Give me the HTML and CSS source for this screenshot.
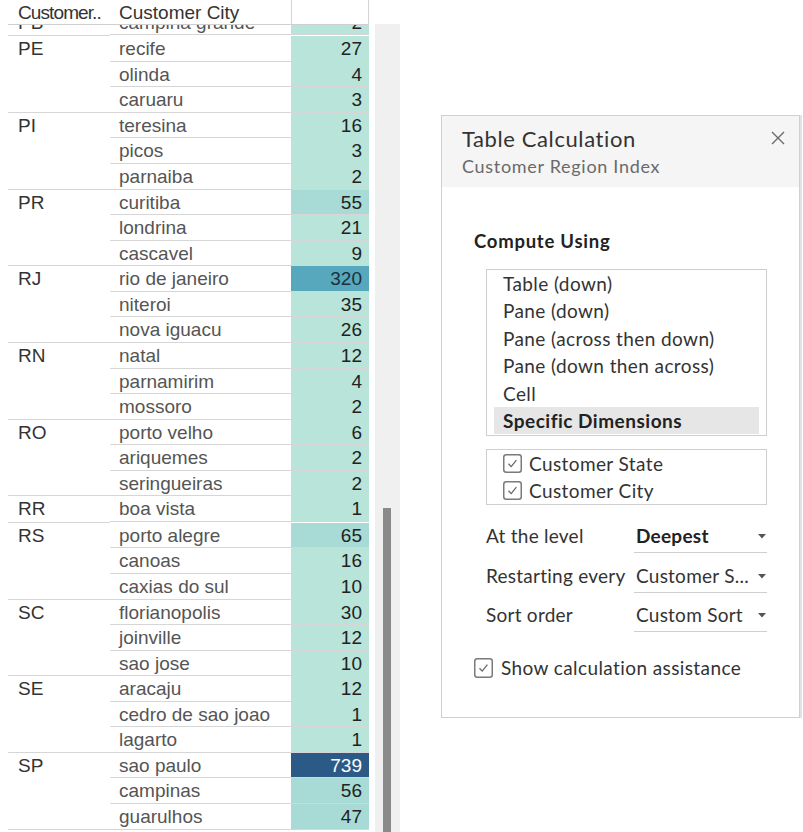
FILE: index.html
```html
<!DOCTYPE html>
<html>
<head>
<meta charset="utf-8">
<link rel="stylesheet" href="styles.css">
</head>
<body>
<div class="page">
  <div class="sheet">
    <div class="grid">
      <div class="head">
        <div class="h-state">Customer..</div>
        <div class="h-city">Customer City</div>
        <div class="h-num"></div>
      </div>
      <div class="viewport">
        <div class="rows">
          <div class="group"><div class="state">PB</div><div class="cities">
            <div class="row"><span class="city">campina grande</span><span class="num c0">2</span></div>
          </div></div>
          <div class="group"><div class="state">PE</div><div class="cities">
            <div class="row"><span class="city">recife</span><span class="num c0">27</span></div>
            <div class="row"><span class="city">olinda</span><span class="num c0">4</span></div>
            <div class="row"><span class="city">caruaru</span><span class="num c0">3</span></div>
          </div></div>
          <div class="group"><div class="state">PI</div><div class="cities">
            <div class="row"><span class="city">teresina</span><span class="num c0">16</span></div>
            <div class="row"><span class="city">picos</span><span class="num c0">3</span></div>
            <div class="row"><span class="city">parnaiba</span><span class="num c0">2</span></div>
          </div></div>
          <div class="group"><div class="state">PR</div><div class="cities">
            <div class="row"><span class="city">curitiba</span><span class="num c1">55</span></div>
            <div class="row"><span class="city">londrina</span><span class="num c0">21</span></div>
            <div class="row"><span class="city">cascavel</span><span class="num c0">9</span></div>
          </div></div>
          <div class="group"><div class="state">RJ</div><div class="cities">
            <div class="row"><span class="city">rio de janeiro</span><span class="num c2">320</span></div>
            <div class="row"><span class="city">niteroi</span><span class="num c0">35</span></div>
            <div class="row"><span class="city">nova iguacu</span><span class="num c0">26</span></div>
          </div></div>
          <div class="group"><div class="state">RN</div><div class="cities">
            <div class="row"><span class="city">natal</span><span class="num c0">12</span></div>
            <div class="row"><span class="city">parnamirim</span><span class="num c0">4</span></div>
            <div class="row"><span class="city">mossoro</span><span class="num c0">2</span></div>
          </div></div>
          <div class="group"><div class="state">RO</div><div class="cities">
            <div class="row"><span class="city">porto velho</span><span class="num c0">6</span></div>
            <div class="row"><span class="city">ariquemes</span><span class="num c0">2</span></div>
            <div class="row"><span class="city">seringueiras</span><span class="num c0">2</span></div>
          </div></div>
          <div class="group"><div class="state">RR</div><div class="cities">
            <div class="row"><span class="city">boa vista</span><span class="num c0">1</span></div>
          </div></div>
          <div class="group"><div class="state">RS</div><div class="cities">
            <div class="row"><span class="city">porto alegre</span><span class="num c1">65</span></div>
            <div class="row"><span class="city">canoas</span><span class="num c0">16</span></div>
            <div class="row"><span class="city">caxias do sul</span><span class="num c0">10</span></div>
          </div></div>
          <div class="group"><div class="state">SC</div><div class="cities">
            <div class="row"><span class="city">florianopolis</span><span class="num c0">30</span></div>
            <div class="row"><span class="city">joinville</span><span class="num c0">12</span></div>
            <div class="row"><span class="city">sao jose</span><span class="num c0">10</span></div>
          </div></div>
          <div class="group"><div class="state">SE</div><div class="cities">
            <div class="row"><span class="city">aracaju</span><span class="num c0">12</span></div>
            <div class="row"><span class="city">cedro de sao joao</span><span class="num c0">1</span></div>
            <div class="row"><span class="city">lagarto</span><span class="num c0">1</span></div>
          </div></div>
          <div class="group"><div class="state">SP</div><div class="cities">
            <div class="row"><span class="city">sao paulo</span><span class="num c3">739</span></div>
            <div class="row"><span class="city">campinas</span><span class="num c1">56</span></div>
            <div class="row"><span class="city">guarulhos</span><span class="num c1">47</span></div>
          </div></div>
        </div>
      </div>
    </div>
    <div class="track"><div class="thumb"></div></div>
  </div>

  <div class="side">
    <div class="panel">
      <div class="panel-head">
        <div class="titles">
          <div class="title">Table Calculation</div>
          <div class="subtitle">Customer Region Index</div>
        </div>
        <svg class="close" width="14" height="14" viewBox="0 0 14 14"><path d="M1 1 L13 13 M13 1 L1 13" stroke="#6b6b6b" stroke-width="1.4" fill="none"/></svg>
      </div>
      <div class="panel-body">
        <div class="section-title">Compute Using</div>
        <div class="listbox">
          <div class="item">Table (down)</div>
          <div class="item">Pane (down)</div>
          <div class="item">Pane (across then down)</div>
          <div class="item">Pane (down then across)</div>
          <div class="item">Cell</div>
          <div class="item selected">Specific Dimensions</div>
        </div>
        <div class="checkbox-box">
          <div class="check-item">
            <svg class="cb" width="19" height="19" viewBox="0 0 19 19"><rect x="0.75" y="0.75" width="17.5" height="17.5" rx="2.5" fill="#fff" stroke="#7a7a7a" stroke-width="1.5"/><path d="M5.5 9.8 L8.2 12.6 L13.4 6.2" stroke="#666" stroke-width="1.3" fill="none"/></svg>
            <span>Customer State</span>
          </div>
          <div class="check-item">
            <svg class="cb" width="19" height="19" viewBox="0 0 19 19"><rect x="0.75" y="0.75" width="17.5" height="17.5" rx="2.5" fill="#fff" stroke="#7a7a7a" stroke-width="1.5"/><path d="M5.5 9.8 L8.2 12.6 L13.4 6.2" stroke="#666" stroke-width="1.3" fill="none"/></svg>
            <span>Customer City</span>
          </div>
        </div>
        <div class="fields">
          <div class="field-row">
            <span class="field-label">At the level</span>
            <div class="dropdown"><span class="dd-value bold">Deepest</span><svg class="arrow" width="8" height="5" viewBox="0 0 8 5"><path d="M0 0 L8 0 L4 4.5 Z" fill="#555"/></svg></div>
          </div>
          <div class="field-row">
            <span class="field-label">Restarting every</span>
            <div class="dropdown"><span class="dd-value">Customer S...</span><svg class="arrow" width="8" height="5" viewBox="0 0 8 5"><path d="M0 0 L8 0 L4 4.5 Z" fill="#555"/></svg></div>
          </div>
          <div class="field-row">
            <span class="field-label">Sort order</span>
            <div class="dropdown"><span class="dd-value">Custom Sort</span><svg class="arrow" width="8" height="5" viewBox="0 0 8 5"><path d="M0 0 L8 0 L4 4.5 Z" fill="#555"/></svg></div>
          </div>
        </div>
        <div class="assist">
          <svg class="cb" width="19" height="20" viewBox="0 0 19 20"><rect x="0.75" y="0.75" width="17.5" height="18.5" rx="2.5" fill="#fff" stroke="#7a7a7a" stroke-width="1.5"/><path d="M5.5 10.3 L8.2 13.1 L13.4 6.7" stroke="#666" stroke-width="1.3" fill="none"/></svg>
          <span>Show calculation assistance</span>
        </div>
      </div>
    </div>
  </div>
</div>
</body>
</html>
```

FILE: styles.css
```css
* { box-sizing: border-box; }
html, body { margin: 0; padding: 0; background: #fff; }
body { width: 803px; height: 832px; overflow: hidden; }

.page { display: flex; height: 832px; }

/* ---------- sheet ---------- */
.sheet { display: flex; width: 400px; height: 832px; flex: none; }
.grid {
  margin-left: 8px;
  width: 361px;
  display: flex;
  flex-direction: column;
  font-family: "Liberation Sans", Arial, sans-serif;
  font-size: 19px;
}
.head {
  display: flex;
  height: 25px;
  flex: none;
  border-bottom: 1px solid #cfcfcf;
  position: relative;
  z-index: 2;
  background: #fff;
  color: #333;
}
.h-state { width: 102px; padding-left: 10px; line-height: 26px; white-space: nowrap; letter-spacing: -0.9px; }
.h-city { width: 181px; padding-left: 9px; line-height: 26px; white-space: nowrap; }
.h-num { width: 78px; border-left: 1px solid #d4d4d4; border-right: 1px solid #d4d4d4; }

.viewport { flex: 1; overflow: hidden; }
.rows { margin-top: -15.3px; }

.group { display: flex; }
.state {
  width: 102px;
  flex: none;
  padding-left: 10px;
  color: #333;
  border-bottom: 1px solid #d6d6d6;
  line-height: 25.5px;
}
.cities { flex: 1; display: flex; flex-direction: column; }
.row {
  display: flex;
  height: 25.57px;
  border-bottom: 1px solid #d6d6d6;
}
.city {
  width: 181px;
  padding-left: 9px;
  color: #555;
  line-height: 25.5px;
  white-space: nowrap;
}
.num {
  width: 78px;
  text-align: right;
  padding-right: 7px;
  color: #222;
  line-height: 25.5px;
  margin-right: 1px;
}
.c0 { background: #b9e4da; }
.c1 { background: #a8dbd5; }
.c2 { background: #57a8bd; color: #1d2f3a; }
.c3 { background: #2c5a87; color: #fff; }

.track {
  margin-left: 6px;
  margin-top: 24px;
  width: 25px;
  background: #f0f0f0;
  display: flex;
  flex-direction: column;
}
.thumb {
  margin-left: 8px;
  margin-top: 484px;
  width: 8px;
  flex: 1;
  background: #8a8a8a;
}

/* ---------- side panel ---------- */
.side { padding-top: 115px; padding-left: 41px; flex: none; }
.panel {
  width: 359px;
  height: 603px;
  border: 1px solid #d0d0d0;
  box-shadow: 2px 0 0 #e2e2e2;
  font-family: Lato, "Open Sans", sans-serif;
  color: #333;
  background: #fff;
}
.panel-head {
  height: 71px;
  background: #f5f5f5;
  display: flex;
  justify-content: space-between;
  padding: 9px 14px 0 20px;
}
.title { font-size: 22px; line-height: 28px; color: #333; letter-spacing: 0.6px; }
.subtitle { font-size: 18px; line-height: 26px; color: #6a6a6a; letter-spacing: 0.7px; }
.close { margin-top: 6px; }

.panel-body { padding: 40px 32px 0 32px; }
.section-title { font-weight: bold; font-size: 18.5px; line-height: 28px; color: #222; letter-spacing: 0.75px; }

.listbox {
  margin: 14px 0 0 12px;
  width: 281px;
  border: 1px solid #cfcfcf;
  padding: 0 7px 1px 7px;
}
.item {
  height: 27.4px;
  line-height: 27.4px;
  font-size: 19px;
  letter-spacing: 0.4px;
  padding-left: 9px;
  color: #333;
  white-space: nowrap;
}
.item.selected { background: #e6e6e6; font-weight: bold; color: #222; letter-spacing: 0.5px; }

.checkbox-box {
  margin: 13px 0 0 12px;
  width: 281px;
  height: 56px;
  border: 1px solid #cfcfcf;
  padding-left: 16px;
}
.check-item {
  display: flex;
  align-items: center;
  gap: 7px;
  height: 27px;
  font-size: 19px;
  letter-spacing: 0.4px;
  color: #333;
}

.fields { margin-top: 8px; margin-left: 12px; }
.field-row {
  display: flex;
  align-items: flex-end;
  height: 39.6px;
  font-size: 19px;
  letter-spacing: 0.25px;
}
.field-label { width: 148px; line-height: 24px; padding-bottom: 5px; white-space: nowrap; color: #333; }
.dropdown {
  width: 133px;
  display: flex;
  justify-content: space-between;
  align-items: flex-end;
  border-bottom: 1px solid #cfcfcf;
  padding: 0 1px 4px 2px;
}
.dd-value { line-height: 24px; white-space: nowrap; color: #333; }
.dd-value.bold { font-weight: bold; color: #222; }
.arrow { margin-bottom: 9px; }

.assist {
  display: flex;
  align-items: center;
  gap: 8px;
  margin-top: 24px;
  line-height: 24px;
  font-size: 19px;
  letter-spacing: 0.4px;
  color: #333;
}
```
